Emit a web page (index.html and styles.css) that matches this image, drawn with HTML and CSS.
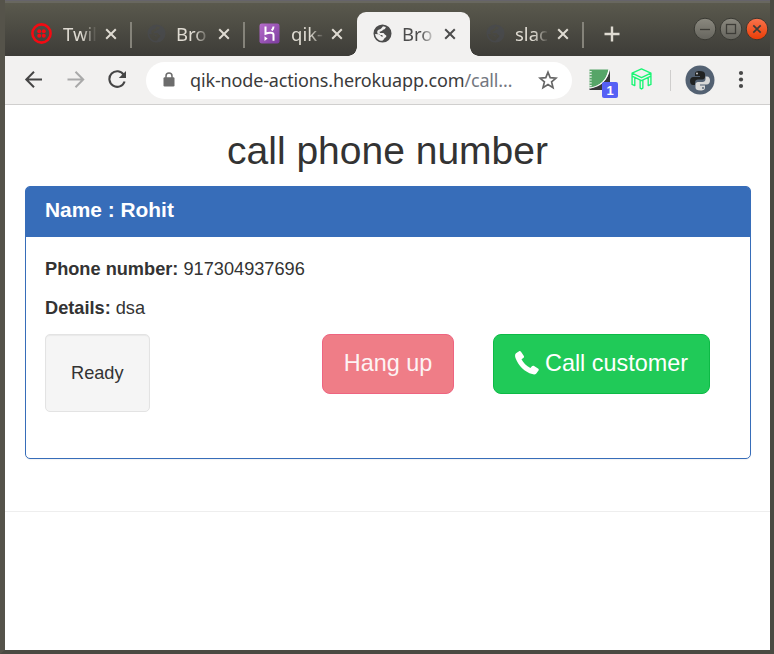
FILE: index.html
```html
<!DOCTYPE html>
<html lang="en">
<head>
<meta charset="utf-8">
<title>call phone number</title>
<link rel="stylesheet" href="styles.css">
</head>
<body>
<svg width="0" height="0" class="defs" aria-hidden="true">
  <symbol id="globe" viewBox="0 0 20 20"><path fill-rule="evenodd" d="M10 .5a9.500 9.500 0 1 1 0 19a9.500 9.500 0 0 1 0-19zM10.500 2.400l3 .8c-.2 1.800-1.400 2.600-3 2.800-.5 1.400-2 1.700-3.600 2.200l.4 1.200h3.300c1.500.2 1.300 1.700 2.600 2.200 1.300.6 1.200 2.300-.4 2.800-1.200.4-1.100 2.300-3 3.300-3.600.1-7-2.600-7.600-7.200l4.200.2c1.600.2 1.300 1.900 2.600 2.400h1.600c-.3-1.300-1.600-1.700-3-1.600-1.300 0-1.800-1.500-3-1.600-.5-2.300.3-3.400 1.900-4 1.600-.3 2.600-1.300 4-3.500z" fill="currentColor"/></symbol>
  <symbol id="close" viewBox="0 0 12 12"><path d="M1.200 1.200 10.800 10.800M10.800 1.200 1.200 10.800" fill="none" stroke="currentColor" stroke-width="2"/></symbol>
</svg>
<div class="window">
  <header class="strip">
    <div class="tab line">
      <svg class="fav" viewBox="0 0 21 21"><circle cx="10.500" cy="10.500" r="9.100" fill="none" stroke="#f40a12" stroke-width="2.600"/><g fill="#f40a12"><circle cx="8.200" cy="8.200" r="2"/><circle cx="12.800" cy="8.200" r="2"/><circle cx="8.200" cy="12.800" r="2"/><circle cx="12.800" cy="12.800" r="2"/></g></svg>
      <span class="label">Twil</span><svg class="x"><use href="#close"/></svg>
    </div>
    <div class="tab line">
      <svg class="fav globe dim"><use href="#globe"/></svg>
      <span class="label">Bro</span><svg class="x"><use href="#close"/></svg>
    </div>
    <div class="tab">
      <svg class="fav heroku" viewBox="0 0 21 21"><defs><linearGradient id="hk" x2="1" y2="1"><stop stop-color="#b66dcb"/><stop offset="1" stop-color="#7c3c9f"/></linearGradient></defs><rect x=".5" y=".5" width="20" height="20" rx="2.200" fill="url(#hk)"/><path d="M6.500 3.500v7.200c3-1.200 8-1.600 8 1v6M14.500 3.500c0 1.800-.8 3-1.800 4" fill="none" stroke="#fff" stroke-width="2"/><path d="M5.500 13.200 8.600 15.600 5.500 18z" fill="#fff"/></svg>
      <span class="label">qik-</span><svg class="x"><use href="#close"/></svg>
    </div>
    <div class="tab active">
      <svg class="fav globe"><use href="#globe"/></svg>
      <span class="label">Bro</span><svg class="x"><use href="#close"/></svg>
    </div>
    <div class="tab line">
      <svg class="fav globe dim"><use href="#globe"/></svg>
      <span class="label">slac</span><svg class="x"><use href="#close"/></svg>
    </div>
    <svg class="plus" viewBox="0 0 16 16"><path d="M8 .5v15M.5 8h15" stroke="#dfdbd2" stroke-width="2.400"/></svg>
    <svg class="controls" viewBox="0 0 76 26">
      <defs><linearGradient id="cg" x2="0" y2="1"><stop stop-color="#8b897f"/><stop offset="1" stop-color="#65645d"/></linearGradient><linearGradient id="cr" x2="0" y2="1"><stop stop-color="#f9744d"/><stop offset="1" stop-color="#e93c05"/></linearGradient></defs>
      <g stroke="#383832"><circle cx="12" cy="13" r="10.800" fill="url(#cg)"/><circle cx="38" cy="13" r="10.800" fill="url(#cg)"/><circle cx="64" cy="13" r="10.800" fill="url(#cr)"/></g>
      <g fill="none" stroke="#3d3c37" stroke-width="1.300"><path d="M7 13.500h10"/><rect x="33.500" y="8.500" width="9" height="9"/><path d="m60.300 9.300 7.400 7.400m0-7.400-7.400 7.400" stroke-width="1.700"/></g>
    </svg>
  </header>
  <nav class="toolbar">
    <svg class="nav" viewBox="0 0 20 20"><path d="M18 9.500H3M10 1.800 2.300 9.500l7.700 7.700" fill="none" stroke="#454545" stroke-width="2"/></svg>
    <svg class="nav" viewBox="0 0 20 20"><path d="M1.500 9.500h15M9.500 1.800 17.200 9.500l-7.700 7.700" fill="none" stroke="#a9a9a9" stroke-width="2"/></svg>
    <svg class="nav" viewBox="0 0 20 20"><path d="M15.800 4.900A7.800 7.800 0 1 0 16.600 11.500" fill="none" stroke="#454545" stroke-width="2.100"/><path d="M18 .9v7.200h-7.200z" fill="#454545"/></svg>
    <div class="address">
      <svg class="lock" viewBox="0 0 12 15"><rect x=".5" y="5.200" width="11" height="9.300" rx="1.200" fill="#6c6c6c"/><path d="M3 6V3.900a3 3 0 0 1 6 0V6" fill="none" stroke="#6c6c6c" stroke-width="1.500"/></svg>
      <span class="url">qik-node-actions.herokuapp.com<span class="path">/call…</span></span>
      <svg class="star" viewBox="0 0 20 20"><path d="m10 2.200 2.200 5.400 5.900.5-4.500 3.800 1.400 5.700-5-3.100-5 3.100 1.400-5.700-4.500-3.800 5.900-.5z" fill="none" stroke="#666" stroke-width="1.700"/></svg>
    </div>
    <svg class="ext" viewBox="0 0 30 30"><path d="M22 1.500V22H1.500V20C13 18 20 12 22 1.500z" fill="#37383a"/><path d="M1.500 1.500h19C19 11.500 13 18 1.500 19.500z" fill="#56a568"/><path d="M21 1.500C19 12 13 18.500 1.500 20.200" fill="none" stroke="#fff" stroke-width="1.200"/><path d="M2.500 3v17" stroke="#e8efe9" stroke-width="2.400" stroke-dasharray="1.200 1.600"/><rect x="14" y="14" width="16" height="16" rx="2" fill="#5560f5"/><text x="22" y="26.500" text-anchor="middle" class="count">1</text></svg>
    <svg class="table" viewBox="0 0 20 21"><path d="M10 .9 19 4.900 10 9.200 1 4.900zM1 4.900v2.800l9 4.300 9-4.300V4.900M1 7.700v8l2.600 1.100V9M19 7.700v8l-2.600 1.100V9M8.700 11.500v7.700l1.300.8 1.300-.8v-7.700" fill="none" stroke="#19f574" stroke-width="1.300" stroke-linejoin="round"/></svg>
    <i class="rule"></i>
    <svg class="avatar" viewBox="0 0 30 30"><circle cx="15" cy="15" r="14.500" fill="#536172"/><path d="M14.500 6c-3.500 0-4.500 1.200-4.500 3v2h5v1H8.500C6 12 5 13.800 5 16s1 4 3 4h2v-2.500c0-2 1.300-3 3-3h4.500c1.500 0 2.500-1 2.500-2.500V9c0-2-2-3-5.500-3z" fill="#202222"/><path d="M15.500 25.500c3.500 0 4.500-1.200 4.500-3v-2h-5v-1h6.500c2.500 0 3.500-1.800 3.500-4s-1-4-3-4h-1.500v2.500c0 2-1.300 3-3 3H13c-1.500 0-2.500 1-2.500 2.500v3c0 2 1.500 3 5 3z" fill="#d9d9d8"/><circle cx="12" cy="8.500" r=".9" fill="#ddd"/><circle cx="18" cy="23" r=".9" fill="#536172"/></svg>
    <svg class="menu" viewBox="0 0 6 20"><g fill="#484848"><circle cx="3" cy="3" r="2.100"/><circle cx="3" cy="9.500" r="2.100"/><circle cx="3" cy="16" r="2.100"/></g></svg>
  </nav>
  <main class="page">
    <h1>call phone number</h1>
    <section class="panel">
      <h2>Name : Rohit</h2>
      <div class="body">
        <p><b>Phone number:</b> 917304937696</p>
        <p><b>Details:</b> dsa</p>
        <div class="actions">
          <div class="status">Ready</div>
          <button class="btn hang">Hang up</button>
          <button class="btn call"><svg class="phone" viewBox="0 0 24 24"><path d="M1 2.300 4.100.3c.7-.5 1.300-.3 1.900.4l2.700 4c.6 1 .4 1.700-.4 2.200l-1.800 1.300c1.700 3.600 5 6.800 8.900 8.800l1.500-1.700c.7-.7 1.300-.8 2.200-.2l3.900 2.500c.8.600 1 1.200.5 2l-2.200 2.900c-.9 1-2.300 1.200-4.100.6C9.900 20.900 3.300 14.600.5 6.900-.2 5-.1 3.200 1 2.300z" fill="#fff"/></svg><span>Call customer</span></button>
        </div>
      </div>
    </section>
    <hr>
  </main>
</div>
</body>
</html>
```
FILE: styles.css
```css
* { box-sizing: border-box; }
body { margin: 0; background: #4c4c44; font-family: "Liberation Sans", Arial, sans-serif; color: #333; }
.defs { position: absolute; }
.window { height: 654px; border: solid #4a4a42; border-width: 0 4px 4px 5px; border-left-color: #55534a; display: flex; flex-direction: column; overflow: hidden; }
.strip { height: 56px; flex: none; margin: 0 -4px 0 -5px; padding: 12px 0 0 18px; display: flex; background: linear-gradient(#66646a 0 1px, #68675f 1px 3px, #5a594d 3px, #3d3c38 56px); font-family: "Noto Sans", sans-serif; border-radius: 4px 4px 0 0; }
.tab { width: 113px; flex: none; height: 44px; display: flex; align-items: center; padding: 0 14px 1px 13px; color: #dfdbd2; position: relative; }
.tab.line::after { content: ""; width: 2px; height: 26px; background: #85837a; position: absolute; right: -1px; top: 10px; }
.fav { width: 21px; height: 21px; flex: none; color: #4c4c4c; }
.fav.heroku { margin-left: 2px; }
.fav.globe { width: 19px; height: 19px; margin: 0 -1px 0 3px; }
.fav.globe.dim { color: #484a4f; opacity: .7; }
.label { width: 34px; margin-left: 11px; font-size: 18.500px; line-height: 26px; white-space: nowrap; -webkit-mask-image: linear-gradient(90deg, #000 55%, transparent 100%); mask-image: linear-gradient(90deg, #000 55%, transparent 100%); }
.x { width: 12px; height: 12px; margin-left: auto; flex: none; }
.tab.active { background: #f2f1f0; color: #4c4c4c; border-radius: 9px 9px 0 0; }
.tab.active::before, .tab.active::after { content: ""; position: absolute; bottom: 0; width: 9px; height: 9px; }
.tab.active::before { left: -9px; background: radial-gradient(circle at 0 0, transparent 8.500px, #f2f1f0 9px); }
.tab.active::after { right: -9px; background: radial-gradient(circle at 100% 0, transparent 8.500px, #f2f1f0 9px); }
.plus { width: 16px; height: 16px; margin: 14px 0 0 21px; }
.controls { width: 76px; height: 26px; margin: 4px 5px 0 auto; flex: none; }
.toolbar { height: 49px; flex: none; background: #f2f1f0; border-bottom: 1px solid #d0cfce; display: flex; align-items: center; padding-left: 19px; }
.nav { width: 20px; height: 20px; margin-right: 22px; flex: none; }
.nav:nth-child(3) { margin-right: 18px; }
.address { width: 426px; height: 37px; border-radius: 19px; background: #fff; display: flex; align-items: center; flex: none; padding: 0 0 1px 17px; font-family: "Noto Sans", sans-serif; }
.lock { width: 12px; height: 15px; flex: none; }
.url { font-size: 18px; line-height: 26px; margin-left: 15px; white-space: nowrap; letter-spacing: -.15px; color: #3b3b3b; width: 334px; }
.path { color: #737780; }
.star { width: 20px; height: 20px; flex: none; margin-left: 14px; }
.ext { width: 30px; height: 30px; margin: 5px 0 0 16px; flex: none; }
.count { font: bold 13px "Liberation Sans", sans-serif; fill: #fff; }
.table { width: 21px; height: 22px; margin: -2px 0 0 13px; flex: none; }
.rule { width: 1px; height: 21px; background: #cfcecd; margin: 0 14px 0 18px; }
.avatar { width: 30px; height: 30px; margin-top: -1px; flex: none; }
.menu { width: 6px; height: 20px; margin-left: 23px; flex: none; }
.page { flex: 1; background: #fff; padding: 24px 19px 0 20px; }
h1 { margin: 0 1px 14px 0; font-size: 39px; font-weight: 400; line-height: 43px; text-align: center; }
.panel { height: 273px; border: 1px solid #376db9; border-radius: 5px; box-shadow: 0 1px 1px rgba(0,0,0,.05); }
h2 { margin: 0; height: 50px; padding: 11px 19px; background: #376db9; color: #fff; font-size: 20.900px; line-height: 23px; border-radius: 3px 3px 0 0; }
.body { padding: 19px 40px 0 19px; font-size: 18.200px; line-height: 26px; }
p { margin: 0 0 13px; }
.actions { display: flex; align-items: flex-start; }
.status { width: 105px; height: 78px; border: 1px solid #e3e3e3; border-radius: 5px; background: #f5f5f5; box-shadow: inset 0 1px 1px rgba(0,0,0,.05); padding: 25px; }
.btn { height: 60px; border: 1px solid; border-radius: 8px; font: 23.400px "Liberation Sans", Arial, sans-serif; color: #fff; padding: 0 0 2px; display: flex; align-items: center; justify-content: center; white-space: nowrap; }
.hang { width: 132px; margin-left: auto; background: #ef7d87; border-color: #ee6480; color: #fdf3f4; }
.call { width: 217px; margin-left: 39px; background: #20ca58; border-color: #0dba46; }
.phone { width: 24px; height: 24px; margin-right: 6px; }
hr { margin: 52px -19px 0 -20px; border: 0; border-top: 1px solid #eee; }
```
